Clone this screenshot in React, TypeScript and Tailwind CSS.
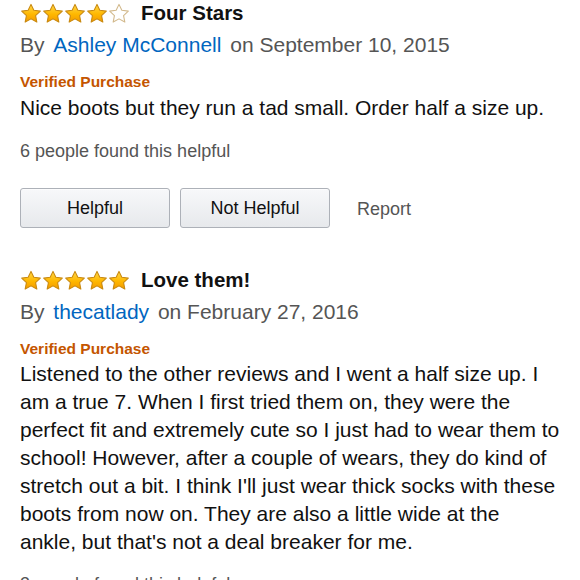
import React from "react";

const FONT = { fontFamily: '"Liberation Sans", Arial, sans-serif' };

function Star({ filled, id }: { filled: boolean; id: string }) {
  return (
    <svg width="22" height="21" viewBox="0 0 24 23" className="block">
      <defs>
        <linearGradient id={id} x1="0" y1="0" x2="0" y2="1">
          <stop offset="0" stopColor="#ffd84a" />
          <stop offset="0.55" stopColor="#ffb800" />
          <stop offset="1" stopColor="#f39a00" />
        </linearGradient>
      </defs>
      <path
        d="M12 1.5l3.1 6.5 7.1.9-5.2 4.9 1.4 7.1L12 17.4l-6.4 3.5 1.4-7.1-5.2-4.9 7.1-.9z"
        fill={filled ? `url(#${id})` : "#ffffff"}
        stroke={filled ? "#c98a12" : "#d2b98c"}
        strokeWidth="1.2"
        strokeLinejoin="round"
      />
    </svg>
  );
}

function Stars({ n, k }: { n: number; k: string }) {
  return (
    <div className="flex w-[110px] shrink-0">
      {[0, 1, 2, 3, 4].map((i) => (
        <Star key={i} filled={i < n} id={`g-${k}-${i}`} />
      ))}
    </div>
  );
}

function Header({ stars, title, author, date, k }: { stars: number; title: string; author: string; date: string; k: string }) {
  return (
    <>
      <div className="flex items-center h-[26px]">
        <Stars n={stars} k={k} />
        <span className="ml-[11px] text-[20.5px] leading-[26px] font-bold text-[#111]">{title}</span>
      </div>
      <p className="mt-[7px] text-[21px] leading-[24px] text-[#555]">
        By <span className="mx-[3px] text-[#0066c0]">{author}</span> on {date}
      </p>
      <p className="mt-[15px] text-[15.5px] leading-[20px] font-bold text-[#c45500]">Verified Purchase</p>
    </>
  );
}

function Button({ label }: { label: string }) {
  return (
    <button className="w-[150px] h-[40px] rounded-[3px] border border-[#adb1b8] bg-gradient-to-b from-[#f7f8fa] to-[#e7e9ec] text-[18px] text-[#111] shadow-[inset_0_1px_0_rgba(255,255,255,0.6)]">
      {label}
    </button>
  );
}

export default function App() {
  return (
    <div className="w-[580px] h-[580px] overflow-hidden bg-white pl-[20px]" style={FONT}>
      <Header k="a" stars={4} title="Four Stars" author="Ashley McConnell" date="September 10, 2015" />
      <p className="mt-[2px] text-[21px] leading-[28px] text-[#111]">
        Nice boots but they run a tad small. Order half a size up.
      </p>
      <p className="mt-[18px] text-[18px] leading-[22px] text-[#555]">6 people found this helpful</p>

      <div className="mt-[26px] flex items-center gap-[10px]">
        <Button label="Helpful" />
        <Button label="Not Helpful" />
        <span className="ml-[17px] mt-[2px] text-[18px] text-[#555]">Report</span>
      </div>

      <div className="mt-[39px]">
        <Header k="b" stars={5} title="Love them!" author="thecatlady" date="February 27, 2016" />
      </div>
      <p className="mt-[1px] text-[21px] leading-[28px] text-[#111] whitespace-nowrap">
        Listened to the other reviews and I went a half size up. I<br />
        am a true 7. When I first tried them on, they were the<br />
        perfect fit and extremely cute so I just had to wear them to<br />
        school! However, after a couple of wears, they do kind of<br />
        stretch out a bit. I think I'll just wear thick socks with these<br />
        boots from now on. They are also a little wide at the<br />
        ankle, but that's not a deal breaker for me.
      </p>
      <p className="mt-[17px] text-[18px] leading-[22px] text-[#555]">3 people found this helpful</p>
    </div>
  );
}
